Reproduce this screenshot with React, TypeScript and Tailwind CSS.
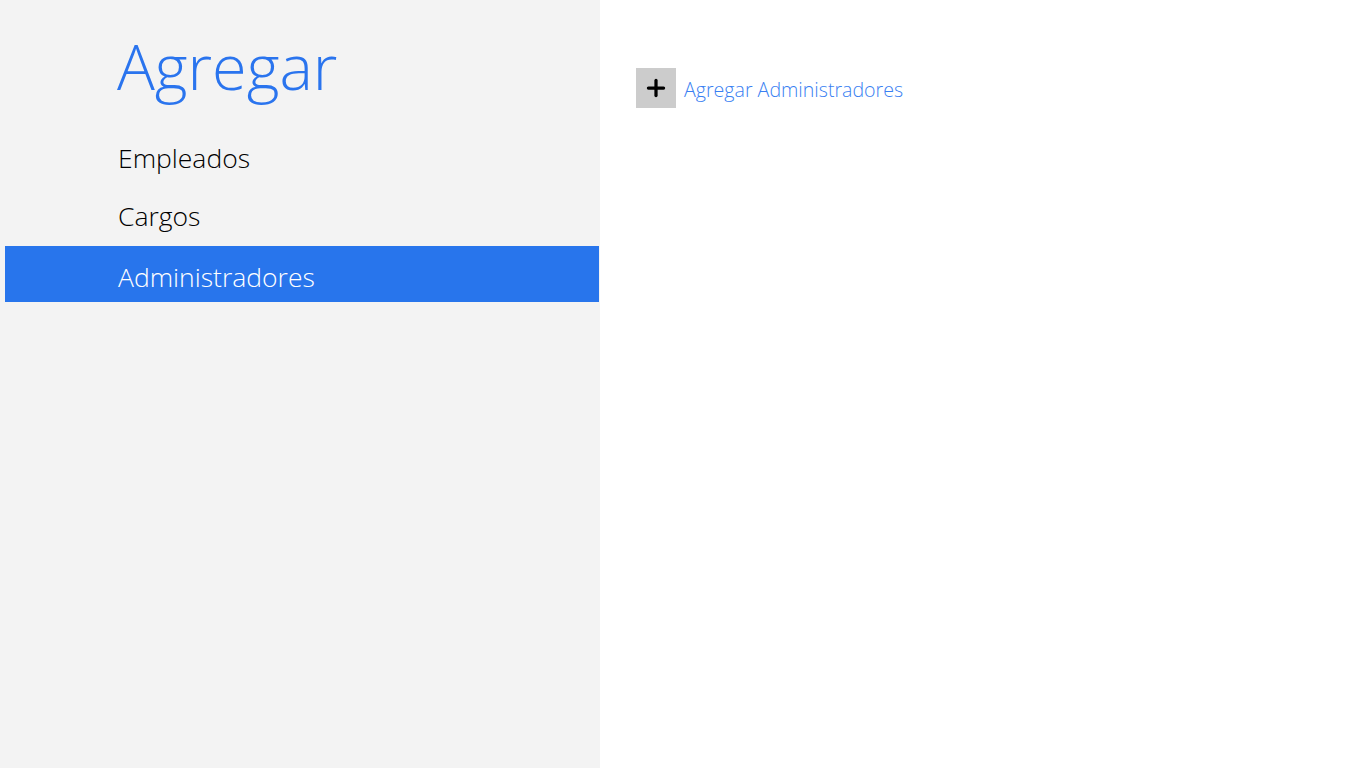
import { Plus } from 'lucide-react';

const items = ['Empleados', 'Cargos', 'Administradores'];

export default function App() {
  const selected = 'Administradores';

  return (
    <div className="flex h-[768px] w-[1366px] overflow-hidden bg-white font-['Open_Sans',sans-serif] font-light">
      {/* Left nav */}
      <div className="flex w-[600px] flex-col bg-[#f3f3f3]">
        <h1 className="ml-[117px] mt-[26px] h-[80px] text-[63px] leading-[80px] text-[#2a74ee]">Agregar</h1>
        <div className="mt-[24px] flex flex-col">
          {items.map((item) => (
            <div
              key={item}
              className={`ml-[5px] mr-[1px] flex h-[56px] items-center pl-[113px] text-[26.5px] ${
                item === selected ? 'bg-[#2875ec] pt-[7px] text-white' : 'h-[58px] text-black'
              }`}
            >
              {item}
            </div>
          ))}
        </div>
      </div>

      {/* Content */}
      <div className="flex-1 pl-[36px] pt-[68px]">
        <div className="flex items-center gap-2">
          <div className="flex h-10 w-10 items-center justify-center bg-[#cccccc]">
            <Plus className="h-[26px] w-[26px] text-black" strokeWidth={3} />
          </div>
          <span className="mt-[3px] text-[19.6px] text-[#3a7ff2]">Agregar Administradores</span>
        </div>
      </div>
    </div>
  );
}
